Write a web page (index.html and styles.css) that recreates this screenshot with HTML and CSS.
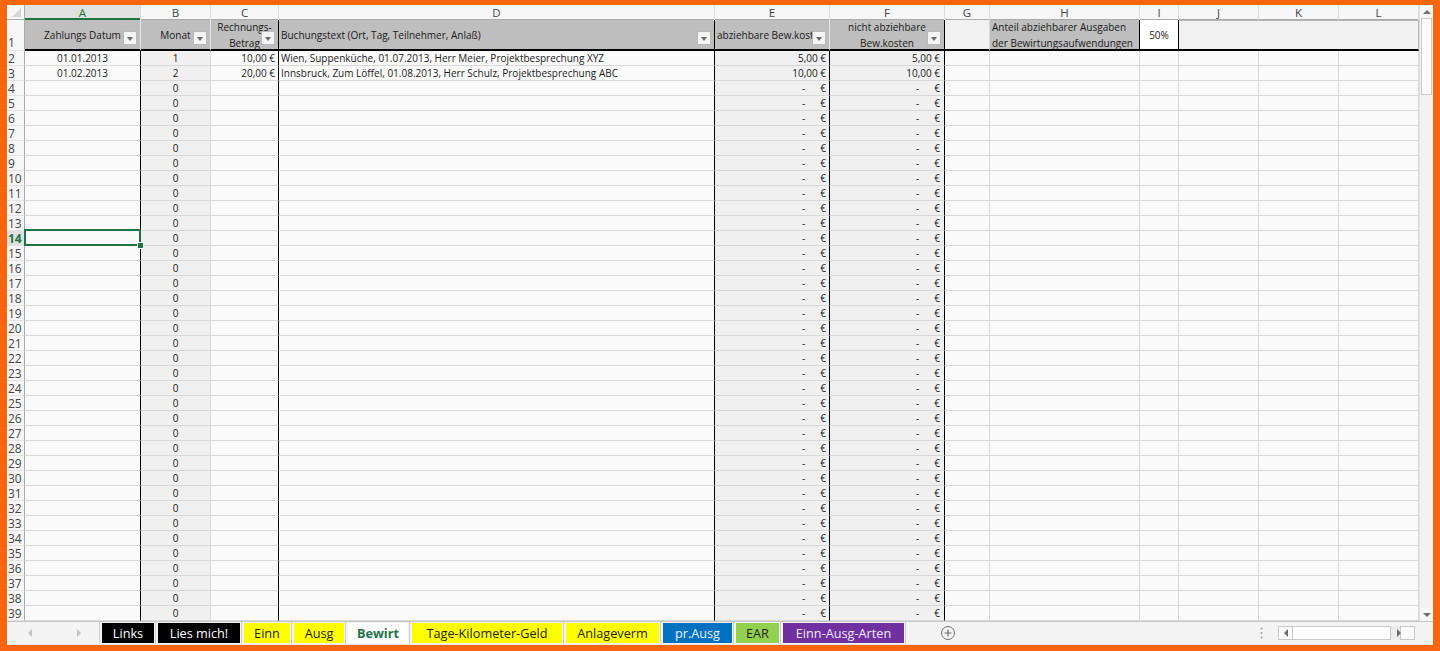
FILE: index.html
```html
<!DOCTYPE html>
<html lang="de">
<head>
<meta charset="utf-8">
<title>Bewirt</title>
<link rel="stylesheet" href="styles.css">
</head>
<body>
<div class="frame">
  <div class="main">
    <div class="sheet">
      <div class="r hdr"><span class="corner"></span><span class="act">A</span><span>B</span><span>C</span><span>D</span><span>E</span><span>F</span><span>G</span><span>H</span><span>I</span><span>J</span><span>K</span><span>L</span></div>
      <div class="r t1">
        <span class="h">1</span>
        <span class="g mid lt">Zahlungs Datum<em class="dd"></em></span>
        <span class="g mid lt">Monat<em class="dd"></em></span>
        <span class="g mid bk">Rechnungs-<br>Betrag<em class="dd"></em></span>
        <span class="g left bk">Buchungstext (Ort, Tag, Teilnehmer, Anlaß)<em class="dd"></em></span>
        <span class="g left lt">abziehbare Bew.kosten<em class="dd"></em></span>
        <span class="g mid bk">nicht abziehbare<br>Bew.kosten<em class="dd"></em></span>
        <span class="pale"></span>
        <span class="g left bk">Anteil abziehbarer Ausgaben<br>der Bewirtungsaufwendungen</span>
        <span class="white mid bk">50%</span>
        <span class="pale box"></span>
      </div>
      <div class="r d"><span class="h">2</span><span>01.01.2013</span><span>1</span><span>10,00 €</span><span>Wien, Suppenküche, 01.07.2013, Herr Meier, Projektbesprechung XYZ</span><span>5,00 €</span><span>5,00 €</span><span></span><span></span><span></span><span></span><span></span><span></span></div>
      <div class="r d"><span class="h">3</span><span>01.02.2013</span><span>2</span><span>20,00 €</span><span>Innsbruck, Zum Löffel, 01.08.2013, Herr Schulz, Projektbesprechung ABC</span><span>10,00 €</span><span>10,00 €</span><span></span><span></span><span></span><span></span><span></span><span></span></div>
      <div class="r d"><span class="h">4</span><span></span><span>0</span><span></span><span></span><span>-<em>€</em></span><span>-<em>€</em></span><span></span><span></span><span></span><span></span><span></span><span></span></div>
      <div class="r d"><span class="h">5</span><span></span><span>0</span><span></span><span></span><span>-<em>€</em></span><span>-<em>€</em></span><span></span><span></span><span></span><span></span><span></span><span></span></div>
      <div class="r d"><span class="h">6</span><span></span><span>0</span><span></span><span></span><span>-<em>€</em></span><span>-<em>€</em></span><span></span><span></span><span></span><span></span><span></span><span></span></div>
      <div class="r d"><span class="h">7</span><span></span><span>0</span><span></span><span></span><span>-<em>€</em></span><span>-<em>€</em></span><span></span><span></span><span></span><span></span><span></span><span></span></div>
      <div class="r d"><span class="h">8</span><span></span><span>0</span><span></span><span></span><span>-<em>€</em></span><span>-<em>€</em></span><span></span><span></span><span></span><span></span><span></span><span></span></div>
      <div class="r d"><span class="h">9</span><span></span><span>0</span><span></span><span></span><span>-<em>€</em></span><span>-<em>€</em></span><span></span><span></span><span></span><span></span><span></span><span></span></div>
      <div class="r d"><span class="h">10</span><span></span><span>0</span><span></span><span></span><span>-<em>€</em></span><span>-<em>€</em></span><span></span><span></span><span></span><span></span><span></span><span></span></div>
      <div class="r d"><span class="h">11</span><span></span><span>0</span><span></span><span></span><span>-<em>€</em></span><span>-<em>€</em></span><span></span><span></span><span></span><span></span><span></span><span></span></div>
      <div class="r d"><span class="h">12</span><span></span><span>0</span><span></span><span></span><span>-<em>€</em></span><span>-<em>€</em></span><span></span><span></span><span></span><span></span><span></span><span></span></div>
      <div class="r d"><span class="h">13</span><span></span><span>0</span><span></span><span></span><span>-<em>€</em></span><span>-<em>€</em></span><span></span><span></span><span></span><span></span><span></span><span></span></div>
      <div class="r d"><span class="h act">14</span><span class="sel"></span><span>0</span><span></span><span></span><span>-<em>€</em></span><span>-<em>€</em></span><span></span><span></span><span></span><span></span><span></span><span></span></div>
      <div class="r d"><span class="h">15</span><span></span><span>0</span><span></span><span></span><span>-<em>€</em></span><span>-<em>€</em></span><span></span><span></span><span></span><span></span><span></span><span></span></div>
      <div class="r d"><span class="h">16</span><span></span><span>0</span><span></span><span></span><span>-<em>€</em></span><span>-<em>€</em></span><span></span><span></span><span></span><span></span><span></span><span></span></div>
      <div class="r d"><span class="h">17</span><span></span><span>0</span><span></span><span></span><span>-<em>€</em></span><span>-<em>€</em></span><span></span><span></span><span></span><span></span><span></span><span></span></div>
      <div class="r d"><span class="h">18</span><span></span><span>0</span><span></span><span></span><span>-<em>€</em></span><span>-<em>€</em></span><span></span><span></span><span></span><span></span><span></span><span></span></div>
      <div class="r d"><span class="h">19</span><span></span><span>0</span><span></span><span></span><span>-<em>€</em></span><span>-<em>€</em></span><span></span><span></span><span></span><span></span><span></span><span></span></div>
      <div class="r d"><span class="h">20</span><span></span><span>0</span><span></span><span></span><span>-<em>€</em></span><span>-<em>€</em></span><span></span><span></span><span></span><span></span><span></span><span></span></div>
      <div class="r d"><span class="h">21</span><span></span><span>0</span><span></span><span></span><span>-<em>€</em></span><span>-<em>€</em></span><span></span><span></span><span></span><span></span><span></span><span></span></div>
      <div class="r d"><span class="h">22</span><span></span><span>0</span><span></span><span></span><span>-<em>€</em></span><span>-<em>€</em></span><span></span><span></span><span></span><span></span><span></span><span></span></div>
      <div class="r d"><span class="h">23</span><span></span><span>0</span><span></span><span></span><span>-<em>€</em></span><span>-<em>€</em></span><span></span><span></span><span></span><span></span><span></span><span></span></div>
      <div class="r d"><span class="h">24</span><span></span><span>0</span><span></span><span></span><span>-<em>€</em></span><span>-<em>€</em></span><span></span><span></span><span></span><span></span><span></span><span></span></div>
      <div class="r d"><span class="h">25</span><span></span><span>0</span><span></span><span></span><span>-<em>€</em></span><span>-<em>€</em></span><span></span><span></span><span></span><span></span><span></span><span></span></div>
      <div class="r d"><span class="h">26</span><span></span><span>0</span><span></span><span></span><span>-<em>€</em></span><span>-<em>€</em></span><span></span><span></span><span></span><span></span><span></span><span></span></div>
      <div class="r d"><span class="h">27</span><span></span><span>0</span><span></span><span></span><span>-<em>€</em></span><span>-<em>€</em></span><span></span><span></span><span></span><span></span><span></span><span></span></div>
      <div class="r d"><span class="h">28</span><span></span><span>0</span><span></span><span></span><span>-<em>€</em></span><span>-<em>€</em></span><span></span><span></span><span></span><span></span><span></span><span></span></div>
      <div class="r d"><span class="h">29</span><span></span><span>0</span><span></span><span></span><span>-<em>€</em></span><span>-<em>€</em></span><span></span><span></span><span></span><span></span><span></span><span></span></div>
      <div class="r d"><span class="h">30</span><span></span><span>0</span><span></span><span></span><span>-<em>€</em></span><span>-<em>€</em></span><span></span><span></span><span></span><span></span><span></span><span></span></div>
      <div class="r d"><span class="h">31</span><span></span><span>0</span><span></span><span></span><span>-<em>€</em></span><span>-<em>€</em></span><span></span><span></span><span></span><span></span><span></span><span></span></div>
      <div class="r d"><span class="h">32</span><span></span><span>0</span><span></span><span></span><span>-<em>€</em></span><span>-<em>€</em></span><span></span><span></span><span></span><span></span><span></span><span></span></div>
      <div class="r d"><span class="h">33</span><span></span><span>0</span><span></span><span></span><span>-<em>€</em></span><span>-<em>€</em></span><span></span><span></span><span></span><span></span><span></span><span></span></div>
      <div class="r d"><span class="h">34</span><span></span><span>0</span><span></span><span></span><span>-<em>€</em></span><span>-<em>€</em></span><span></span><span></span><span></span><span></span><span></span><span></span></div>
      <div class="r d"><span class="h">35</span><span></span><span>0</span><span></span><span></span><span>-<em>€</em></span><span>-<em>€</em></span><span></span><span></span><span></span><span></span><span></span><span></span></div>
      <div class="r d"><span class="h">36</span><span></span><span>0</span><span></span><span></span><span>-<em>€</em></span><span>-<em>€</em></span><span></span><span></span><span></span><span></span><span></span><span></span></div>
      <div class="r d"><span class="h">37</span><span></span><span>0</span><span></span><span></span><span>-<em>€</em></span><span>-<em>€</em></span><span></span><span></span><span></span><span></span><span></span><span></span></div>
      <div class="r d"><span class="h">38</span><span></span><span>0</span><span></span><span></span><span>-<em>€</em></span><span>-<em>€</em></span><span></span><span></span><span></span><span></span><span></span><span></span></div>
      <div class="r d"><span class="h">39</span><span></span><span>0</span><span></span><span></span><span>-<em>€</em></span><span>-<em>€</em></span><span></span><span></span><span></span><span></span><span></span><span></span></div>
    </div>
    <div class="vs">
      <div class="vbtn"><span class="tri up"></span></div>
      <div class="vthumb"></div>
      <div class="vtrack"></div>
      <div class="vbtn"><span class="tri down"></span></div>
    </div>
  </div>
  <div class="tabbar">
    <div class="nav"><span class="tri left"></span><span class="tri right"></span></div>
    <div class="tabs">
      <div class="t"><span class="lbl black w-links">Links</span></div>
      <div class="t"><span class="lbl black w-lies">Lies mich!</span></div>
      <div class="t"><span class="lbl yellow w-einn">Einn</span></div>
      <div class="t"><span class="lbl yellow w-ausg">Ausg</span></div>
      <div class="t"><span class="lbl active w-bewirt">Bewirt</span></div>
      <div class="t"><span class="lbl yellow w-tage">Tage-Kilometer-Geld</span></div>
      <div class="t"><span class="lbl yellow w-anl">Anlageverm</span></div>
      <div class="t"><span class="lbl blue w-pr">pr.Ausg</span></div>
      <div class="t"><span class="lbl green w-ear">EAR</span></div>
      <div class="t"><span class="lbl purple w-arten">Einn-Ausg-Arten</span></div>
    </div>
    <div class="plus">
      <svg width="16" height="16" viewBox="0 0 16 16"><circle cx="8" cy="8" r="6.5" fill="none" stroke="#6f6f6f" stroke-width="1"/><path d="M8 4.5v7M4.5 8h7" stroke="#6f6f6f" stroke-width="1.2"/></svg>
    </div>
    <div class="right">
      <svg class="dots" width="3" height="12" viewBox="0 0 3 12"><circle cx="1.5" cy="1.5" r="1" fill="#a0a0a0"/><circle cx="1.5" cy="6" r="1" fill="#a0a0a0"/><circle cx="1.5" cy="10.5" r="1" fill="#a0a0a0"/></svg>
      <div class="hs">
        <div class="hbtn"><span class="tri left dark"></span></div>
        <div class="hthumb"></div>
        <div class="htrack"></div>
        <div class="hbtn"><span class="tri right dark"></span></div>
      </div>
    </div>
  </div>
</div>
</body>
</html>
```

FILE: styles.css
```css
html, body {
  margin: 0;
  padding: 0;
}
body {
  background: #f7650f;
  font-family: "Open Sans", "Noto Sans", sans-serif;
}
.frame {
  width: 1440px;
  height: 651px;
  box-sizing: border-box;
  padding: 5px 7px 6px 7px;
  display: flex;
  flex-direction: column;
}
.main {
  display: flex;
  height: 616px;
  background: #fafafa;
}
.sheet {
  width: 1412px;
  display: grid;
  grid-template-columns: 18px 116px 70px 68px 436px 115px 115px 45px 150px 39px 80px 80px 80px;
  grid-template-rows: 15px 31px repeat(38, 15px);
  background: #fafafa;
}
.r {
  display: contents;
}
.r > span {
  box-sizing: border-box;
  border-right: 1px solid #d9d9d9;
  border-bottom: 1px solid #d9d9d9;
  font-size: 10px;
  line-height: 15px;
  padding: 0 3px;
  white-space: nowrap;
  overflow: hidden;
  color: #1a1a1a;
  position: relative;
}

/* column header row */
.r.hdr > span {
  background: #f7f7f7;
  color: #444;
  font-size: 11.5px;
  line-height: 15px;
  text-align: center;
  border-bottom: none;
  box-shadow: inset 0 -1px 0 #ababab;
  border-right: 1px solid #dcdcdc;
  padding: 0;
  overflow: visible;
}
.r.hdr > span.act {
  background: #e1e1e1;
  color: #217346;
  box-shadow: inset 0 -2px 0 #217346;
}
.r.hdr > span.corner {
  border-right: 1px solid #ababab;
}
.r.hdr > span.corner::after {
  content: "";
  position: absolute;
  right: 3px;
  bottom: 3px;
  border-left: 9px solid transparent;
  border-bottom: 9px solid #d6d6d6;
}

/* row headers */
.r > span.h {
  background: #f7f7f7;
  color: #444;
  font-size: 12px;
  line-height: 15px;
  padding: 0 0 0 1px;
  border-right: 1px solid #ababab;
  border-bottom: 1px solid #e3e3e3;
  overflow: visible;
}
.r > span.h.act {
  background: #e1e1e1;
  color: #217346;
  font-weight: 700;
}

/* row 1 (table headers) */
.r.t1 > span {
  display: flex;
  align-items: center;
  line-height: 16px;
  border-bottom: 2px solid #000;
  white-space: normal;
}
.r.t1 > span.h {
  display: block;
  padding-top: 15px;
  border-bottom: 1px solid #e3e3e3;
}
.r.t1 > .g {
  background: #bebebe;
}
.r.t1 > .pale {
  background: #f1f1f1;
}
.r.t1 > .white {
  background: #ffffff;
}
.r.t1 > .mid {
  justify-content: center;
  text-align: center;
}
.r.t1 > .left {
  justify-content: flex-start;
  text-align: left;
  padding-left: 2px;
}
.r.t1 > .lt {
  border-right: 1px solid #e6e6e6;
}
.r.t1 > .bk {
  border-right: 1px solid #000;
}
.r.t1 > .box {
  grid-column: span 3;
  border-top: 1px solid #b5b5b5;
  border-right: 1px solid #b5b5b5;
}
.r.t1 > span:nth-child(6) {
  white-space: nowrap;
  overflow: hidden;
}
.dd {
  position: absolute;
  right: 3px;
  bottom: 4px;
  width: 14px;
  height: 14px;
  box-sizing: border-box;
  background: #f4f4f4;
  border: 1px solid #b9b9b9;
}
.dd::after {
  content: "";
  position: absolute;
  left: 3px;
  top: 5px;
  border-left: 3.5px solid transparent;
  border-right: 3.5px solid transparent;
  border-top: 4px solid #6a6a6a;
}

/* data rows */
.r.d > span:nth-child(2) {
  text-align: center;
  border-right-color: #000;
}
.r.d > span:nth-child(3) {
  text-align: center;
  background: #f0f0f0;
}
.r.d > span:nth-child(4) {
  text-align: right;
  border-right-color: #000;
}
.r.d > span:nth-child(5) {
  border-right-color: #000;
  padding-left: 2px;
}
.r.d > span:nth-child(6),
.r.d > span:nth-child(7) {
  text-align: right;
  background: #f0f0f0;
  border-right-color: #000;
}
.r.d > span:nth-child(6) {
  padding-right: 3px;
}
.r.d > span:nth-child(7) {
  padding-right: 4px;
}
.r.d em {
  font-style: normal;
  margin-left: 15px;
}

/* selected cell */
.r > span.sel {
  overflow: visible;
  z-index: 2;
}
.sel::before {
  content: "";
  position: absolute;
  left: -1px;
  top: -2px;
  right: -1px;
  bottom: -1px;
  border: 2px solid #217346;
}
.sel::after {
  content: "";
  position: absolute;
  right: -4px;
  bottom: -4px;
  width: 5px;
  height: 5px;
  background: #217346;
  border: 1px solid #fff;
}

/* vertical scrollbar */
.vs {
  width: 14px;
  display: flex;
  flex-direction: column;
  background: #f2f2f2;
  border-left: 1px solid #e2e2e2;
}
.vbtn {
  height: 13px;
  display: flex;
  align-items: center;
  justify-content: center;
  background: #f7f7f7;
}
.vthumb {
  height: 77px;
  margin: 0 1px;
  background: #fdfdfd;
  border: 1px solid #c9c9c9;
  box-sizing: border-box;
}
.vtrack {
  flex: 1;
}
.tri {
  display: inline-block;
  width: 0;
  height: 0;
}
.tri.up {
  border-left: 4px solid transparent;
  border-right: 4px solid transparent;
  border-bottom: 4px solid #707070;
}
.tri.down {
  border-left: 4px solid transparent;
  border-right: 4px solid transparent;
  border-top: 4px solid #707070;
}
.tri.left {
  border-top: 4px solid transparent;
  border-bottom: 4px solid transparent;
  border-right: 4px solid #c4c4c4;
}
.tri.right {
  border-top: 4px solid transparent;
  border-bottom: 4px solid transparent;
  border-left: 4px solid #c4c4c4;
}
.tri.dark.left {
  border-right-color: #6c6c6c;
}
.tri.dark.right {
  border-left-color: #6c6c6c;
}

/* tab bar */
.tabbar {
  height: 24px;
  box-sizing: border-box;
  background: #f4f4f4;
  border-top: 1px solid #c6c6c6;
  border-bottom: 1px solid #e8e8e8;
  display: flex;
  align-items: stretch;
}
.nav {
  width: 92px;
  display: flex;
  align-items: center;
  gap: 23px;
  padding-left: 21px;
  box-sizing: border-box;
}
.tabs {
  display: flex;
  border-left: 1px solid #cfcfcf;
}
.t {
  display: flex;
  padding: 1px 1px 1px 2px;
  border-right: 1px solid #cfcfcf;
}
.lbl {
  display: flex;
  align-items: center;
  justify-content: center;
  font-size: 12.7px;
  color: #222;
  white-space: nowrap;
}
.black { background: #000; color: #fff; }
.yellow { background: #ffff00; color: #222; }
.blue { background: #0070c0; color: #e8f0ff; }
.green { background: #92d050; color: #222; }
.purple { background: #7030a0; color: #f0e8f8; }
.active {
  background: #fff;
  color: #217346;
  font-weight: 700;
}
.w-links { width: 52px; }
.w-lies { width: 82px; }
.w-einn { width: 46px; }
.w-ausg { width: 50px; }
.w-bewirt { width: 60px; }
.w-tage { width: 150px; }
.w-anl { width: 93px; }
.w-pr { width: 69px; }
.w-ear { width: 43px; }
.w-arten { width: 121px; }
.plus {
  display: flex;
  align-items: center;
  margin-left: 34px;
}
.right {
  margin-left: auto;
  display: flex;
  align-items: center;
  padding-right: 18px;
}
.dots {
  margin-right: 15px;
}
.hs {
  display: flex;
  height: 14px;
  width: 137px;
}
.hbtn {
  width: 15px;
  flex: none;
  box-sizing: border-box;
  border: 1px solid #c8c8c8;
  background: #fbfbfb;
  display: flex;
  align-items: center;
  justify-content: center;
}
.hthumb {
  width: 98px;
  flex: none;
  box-sizing: border-box;
  border: 1px solid #c8c8c8;
  border-left: none;
  background: #fefefe;
}
.htrack {
  flex: 1;
  background: #ececec;
}
```
